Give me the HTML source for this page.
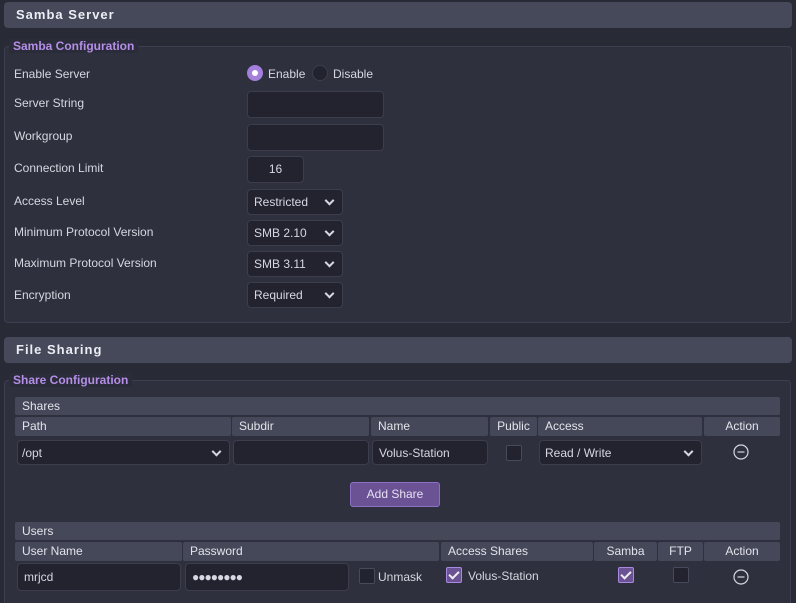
<!DOCTYPE html>
<html><head><style>
*{box-sizing:border-box;margin:0;padding:0}
html,body{width:796px;height:603px;overflow:hidden}
body{background:#282a35;font-family:"Liberation Sans",sans-serif;font-size:12px;color:#d6d7e0;position:relative}
.a{position:absolute}
.hdr{background:#464959;border-radius:4px;font-weight:bold;font-size:13px;letter-spacing:1px;color:#eceef5;padding-left:12px;line-height:26px}
.fs{border:1px solid #3d3f50;background:#2e303e;border-radius:4px}
.lg{color:#b48ee8;font-weight:bold;font-size:12px;background:#2b2c39;padding:0 4px}
.lbl{line-height:14px}
.in{background:#22232f;border:1px solid #3c3e4e;border-radius:4px;padding-left:6px;line-height:24px;color:#d6d7e0}
.sel::after{content:"";position:absolute;right:9px;top:50%;width:5px;height:5px;border-right:2px solid #d6d7e0;border-bottom:2px solid #d6d7e0;transform:translateY(-70%) rotate(45deg)}
.th{background:#454859;border-radius:2px;padding-left:7px;line-height:19px;color:#e2e3ea}
.c{text-align:center;padding-left:0}
.cb{width:16px;height:16px;border:1px solid #474a5b;background:#22232f;border-radius:2px}
.ck{background:#6a5294;border-color:#a98ae0}
.ck::after{content:"";position:absolute;left:4px;top:1px;width:4px;height:8px;border-right:2px solid #eee;border-bottom:2px solid #eee;transform:rotate(45deg)}
</style></head><body>
<div class="a hdr" style="left:4px;top:2px;width:788px;height:26px">Samba Server</div>
<div class="a fs" style="left:4px;top:46px;width:788px;height:277px"></div>
<div class="a lg" style="left:9px;top:39px;line-height:14px">Samba Configuration</div>
<div class="a lbl" style="left:14px;top:67px">Enable Server</div>
<div class="a lbl" style="left:14px;top:96px">Server String</div>
<div class="a lbl" style="left:14px;top:129px">Workgroup</div>
<div class="a lbl" style="left:14px;top:161px">Connection Limit</div>
<div class="a lbl" style="left:14px;top:194px">Access Level</div>
<div class="a lbl" style="left:14px;top:225px">Minimum Protocol Version</div>
<div class="a lbl" style="left:14px;top:256px">Maximum Protocol Version</div>
<div class="a lbl" style="left:14px;top:288px">Encryption</div>
<div class="a" style="left:247px;top:65px;width:16px;height:16px;border-radius:50%;background:#a47fdc"><div class="a" style="left:5px;top:5px;width:6px;height:6px;border-radius:50%;background:#fff"></div></div>
<div class="a lbl" style="left:268px;top:67px">Enable</div>
<div class="a" style="left:312px;top:65px;width:16px;height:16px;border-radius:50%;background:#22232f;border:1px solid #3c3e4e"></div>
<div class="a lbl" style="left:333px;top:67px">Disable</div>
<div class="a in" style="left:247px;top:91px;width:137px;height:27px"></div>
<div class="a in" style="left:247px;top:124px;width:137px;height:27px"></div>
<div class="a in c" style="left:247px;top:156px;width:57px;height:27px;line-height:25px">16</div>
<div class="a in sel" style="left:247px;top:189px;width:96px;height:26px">Restricted</div>
<div class="a in sel" style="left:247px;top:220px;width:96px;height:26px">SMB 2.10</div>
<div class="a in sel" style="left:247px;top:251px;width:96px;height:26px">SMB 3.11</div>
<div class="a in sel" style="left:247px;top:282px;width:96px;height:26px">Required</div>

<div class="a hdr" style="left:4px;top:337px;width:788px;height:26px">File Sharing</div>
<div class="a fs" style="left:4px;top:380px;width:787px;height:240px"></div>
<div class="a lg" style="left:9px;top:373px;line-height:14px">Share Configuration</div>
<div class="a th" style="left:15px;top:397px;width:765px;height:18px;line-height:18px">Shares</div>
<div class="a th" style="left:15px;top:417px;width:216px">Path</div>
<div class="a th" style="left:232px;top:417px;width:137px">Subdir</div>
<div class="a th" style="left:371px;top:417px;width:117px">Name</div>
<div class="a th c" style="left:490px;top:417px;width:47px">Public</div>
<div class="a th" style="left:538px;top:417px;width:164px">Access</div>
<div class="a th c" style="left:704px;top:417px;width:76px">Action</div>
<div class="a in sel" style="left:17px;top:440px;width:213px;height:25px;padding-left:4px">/opt</div>
<div class="a in" style="left:233px;top:440px;width:136px;height:25px"></div>
<div class="a in" style="left:372px;top:440px;width:116px;height:25px">Volus-Station</div>
<div class="a cb" style="left:506px;top:445px"></div>
<div class="a in sel" style="left:539px;top:440px;width:163px;height:25px;padding-left:5px">Read / Write</div>
<svg class="a" style="left:733px;top:444px" width="16" height="16" viewBox="0 0 16 16"><circle cx="8" cy="8" r="7" fill="none" stroke="#d6d7e0" stroke-width="1.2"/><line x1="4.5" y1="8" x2="11.5" y2="8" stroke="#d6d7e0" stroke-width="1.2"/></svg>
<div class="a" style="left:350px;top:482px;width:90px;height:25px;background:#6a5294;border:1px solid #8d70c4;border-radius:3px;text-align:center;line-height:23px;color:#e6e0f2">Add Share</div>
<div class="a th" style="left:15px;top:522px;width:765px;height:18px;line-height:18px">Users</div>
<div class="a th" style="left:15px;top:542px;width:167px">User Name</div>
<div class="a th" style="left:183px;top:542px;width:256px">Password</div>
<div class="a th" style="left:441px;top:542px;width:152px">Access Shares</div>
<div class="a th c" style="left:594px;top:542px;width:63px">Samba</div>
<div class="a th c" style="left:658px;top:542px;width:45px">FTP</div>
<div class="a th c" style="left:704px;top:542px;width:76px">Action</div>
<div class="a in" style="left:17px;top:563px;width:164px;height:28px;line-height:26px">mrjcd</div>
<div class="a in" style="left:185px;top:563px;width:164px;height:28px;line-height:26px;letter-spacing:-1px">●●●●●●●●</div>
<div class="a cb" style="left:359px;top:568px"></div>
<div class="a lbl" style="left:378px;top:570px">Unmask</div>
<div class="a cb ck" style="left:446px;top:567px"></div>
<div class="a lbl" style="left:468px;top:569px">Volus-Station</div>
<div class="a cb ck" style="left:618px;top:567px"></div>
<div class="a cb" style="left:673px;top:567px"></div>
<svg class="a" style="left:733px;top:569px" width="16" height="16" viewBox="0 0 16 16"><circle cx="8" cy="8" r="7" fill="none" stroke="#d6d7e0" stroke-width="1.2"/><line x1="4.5" y1="8" x2="11.5" y2="8" stroke="#d6d7e0" stroke-width="1.2"/></svg>
</body></html>
